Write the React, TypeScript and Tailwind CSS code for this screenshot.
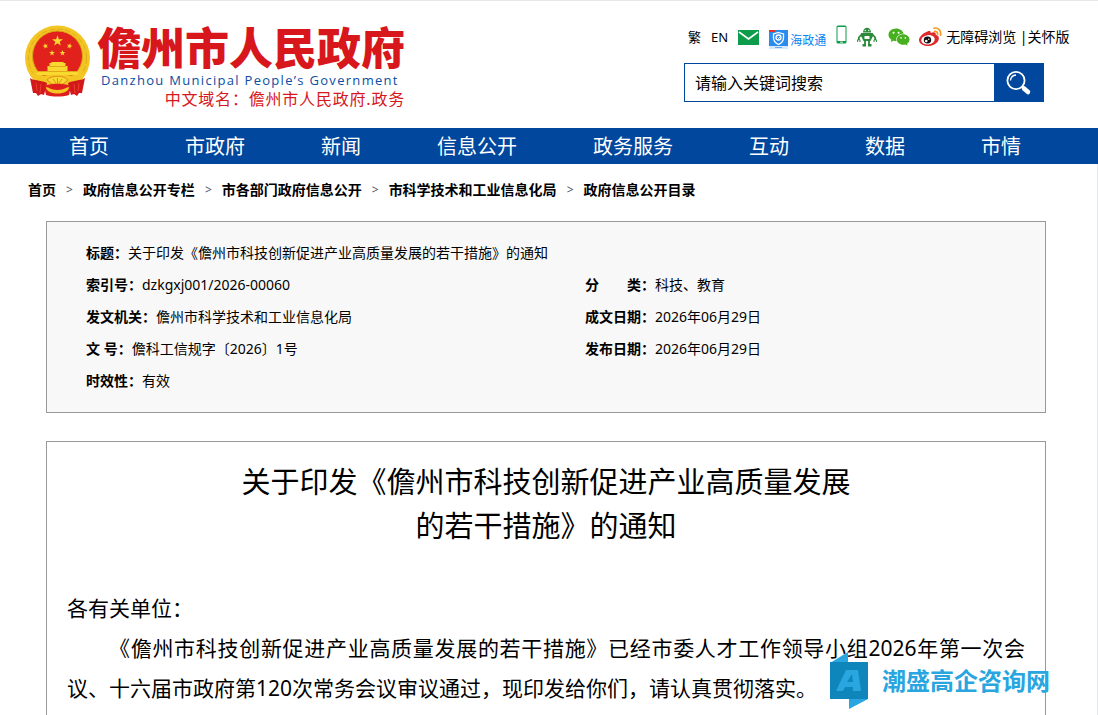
import React from 'react';
import { AiFillWechat } from 'react-icons/ai';

const navItems = ['首页', '市政府', '新闻', '信息公开', '政务服务', '互动', '数据', '市情'];

const crumbs = ['首页', '政府信息公开专栏', '市各部门政府信息公开', '市科学技术和工业信息化局', '政府信息公开目录'];

const metaRows = [
  [{ label: '索引号', value: 'dzkgxj001/2026-00060' }, { label: '分\u3000\u3000类', value: '科技、教育' }],
  [{ label: '发文机关', value: '儋州市科学技术和工业信息化局' }, { label: '成文日期', value: '2026年06月29日' }],
  [{ label: '文 号', value: '儋科工信规字〔2026〕1号' }, { label: '发布日期', value: '2026年06月29日' }],
];

const starPath = 'M0 -5 L1.2 -1.6 L4.8 -1.5 L1.9 0.6 L2.9 4 L0 2 L-2.9 4 L-1.9 0.6 L-4.8 -1.5 L-1.2 -1.6 Z';

const Emblem = () => (
  <svg viewBox="0 0 66 72" className="h-[72px] w-[66px] shrink-0" aria-hidden="true">
    <circle cx="32.500" cy="33" r="32.500" fill="#f3c623" />
    <circle cx="32.500" cy="33" r="29" fill="none" stroke="#dfae1c" strokeWidth="1" strokeDasharray="6 2" />
    <circle cx="32.500" cy="31" r="25" fill="#e1211c" stroke="#d9a514" strokeWidth="1" />
    <g fill="#f8d92f">
      <path d={starPath} transform="translate(32.500 16) scale(1.150)" />
      <path d={starPath} transform="translate(20.500 21) rotate(-15) scale(0.600)" />
      <path d={starPath} transform="translate(44.500 21) rotate(15) scale(0.600)" />
      <path d={starPath} transform="translate(27 28) scale(0.600)" />
      <path d={starPath} transform="translate(37.500 28) scale(0.600)" />
      <path d="M24.500 38h2v-1h12v1h2v3h-16zM22.500 41h20v5h-20z" />
      <path d="M14 46h37l4 4H10z" />
    </g>
    <path d="M24 41.500h17M14 46.500h37" stroke="#e09a1a" strokeWidth="0.800" />
    <path d="M5 47c6 3 12 4 18 3h19c6 1 12 0 18-3l-3 9c-14 5-34 5-48 0z" fill="#f3c623" />
    <path d="M5 53c4 3 12 2 17 5l-3 12-3-1-3 2-2-3-3 0z" fill="#d2181b" />
    <path d="M60 53c-4 3-12 2-17 5l3 12 3-1 3 2 2-3 3 0z" fill="#d2181b" />
    <path d="M11 58l1 8M16 59l-1 9M54 58l-1 8M49 59l1 9" stroke="#ef4a35" strokeWidth="0.800" />
    <path d="M22 55c4-5 17-5 21 0l-5 4H27z" fill="#f8d92f" stroke="#e0781a" strokeWidth="0.800" />
    <path d="M32.500 53v5M28 54l3 4M37 54l-3 4" stroke="#e0781a" strokeWidth="0.800" />
    <path d="M19 61c8-3 19-3 27 0l-2 9c-7 2-16 2-23 0z" fill="#de1f1d" />
    <path d="M21 62c3 0 4 3 11.500 3S41 62 44 62c0 4-5 6.500-11.500 6.500S21 66 21 62z" fill="#f3c623" />
  </svg>
);

const MailIcon = () => (
  <svg viewBox="0 0 21 15" className="h-[15px] w-[21px]" aria-hidden="true">
    <rect width="21" height="15" fill="#0d9c49" />
    <path d="M1 2l9.500 7L20 2" fill="none" stroke="#fff" strokeWidth="1.600" />
  </svg>
);

const ShieldAppIcon = () => (
  <svg viewBox="0 0 19 19" className="h-[19px] w-[19px]" aria-hidden="true">
    <rect width="19" height="16" fill="#2b8cf0" />
    <path d="M0 16h19v3H0z" fill="#d5e9fc" />
    <path d="M6 17.500h7" stroke="#69aaf0" />
    <rect width="6" height="2" fill="#e5322d" />
    <path d="M9.500 2.500l5 1.500v4c0 3-2 5-5 6.500-3-1.500-5-3.500-5-6.500V4z" fill="none" stroke="#fff" strokeWidth="1.300" />
    <circle cx="9.500" cy="7.500" r="2.500" fill="none" stroke="#fff" strokeWidth="1.300" />
    <path d="M8.500 7.500l1 1 2-2" fill="none" stroke="#fff" />
  </svg>
);

const PhoneIcon = () => (
  <svg viewBox="0 0 11 19" className="h-[19px] w-[11px]" aria-hidden="true">
    <rect x="0.500" y="0.500" width="10" height="18" rx="1.500" fill="#0d9c49" />
    <rect x="1.500" y="2" width="8" height="14" fill="#fff" />
    <path d="M4 17.200h3" stroke="#fff" strokeWidth="0.800" />
  </svg>
);

const RobotIcon = () => (
  <svg viewBox="0 0 20 20" className="h-5 w-5" aria-hidden="true">
    <path d="M6 5.500c0-6.500 8-6.500 8 0z" fill="#2c8a3b" />
    <path d="M4 6h12v3l-2.500 5h-7L4 9z" fill="#2c8a3b" />
    <g fill="none" stroke="#2c8a3b">
      <path d="M5 7L1.800 10.500V13M15 7l3.200 3.500V13" strokeWidth="1.800" />
      <path d="M0.600 15v-2.200h2.400V15M17 15v-2.200h2.400V15" />
      <path d="M8 13v4M12 13v4" strokeWidth="1.800" />
    </g>
    <path d="M5.500 17H9v2.500H5.500zM11 17h3.500v2.500H11z" fill="#2c8a3b" />
    <circle cx="8.300" cy="3.500" r="0.700" fill="#fff" />
    <circle cx="11.700" cy="3.500" r="0.700" fill="#fff" />
    <path d="M7.500 9h5v3h-5z" fill="#fff" />
  </svg>
);

const WeiboIcon = () => (
  <svg viewBox="0 0 23 20" className="h-5 w-[23px]" aria-hidden="true">
    <path d="M8.500 4.500c2-1 3.500-.5 3.200 1.500 3-1.200 5.500-1 5 1.800 2.500.8 3.800 2.300 3 4.700C18.500 16.500 14 19 9 19c-5 0-9-2.500-9-6 0-3 4-7 8.500-8.500z" fill="#dc2a2c" />
    <ellipse cx="9" cy="12.800" rx="6.800" ry="4.700" fill="#fff" transform="rotate(-8 9 12.800)" />
    <ellipse cx="8.500" cy="13" rx="3.700" ry="3.400" fill="#111" />
    <circle cx="7.300" cy="14" r="1.300" fill="#fff" />
    <circle cx="9.800" cy="12.200" r="0.700" fill="#fff" />
    <path d="M15 1.200c4-1 7.500 2.300 6.500 7M15.500 4.300c2-.3 3.500 1.200 3 3.200" fill="none" stroke="#f39a1e" strokeWidth="1.700" strokeLinecap="round" />
  </svg>
);

const SearchIcon = () => (
  <svg viewBox="0 0 26 26" className="h-[26px] w-[26px]" aria-hidden="true">
    <circle cx="10" cy="10.500" r="8.600" fill="none" stroke="#fff" strokeWidth="1.800" />
    <path d="M4.500 10.500c.2-3 2.300-5.200 5.500-5.500" fill="none" stroke="#fff" strokeWidth="1.300" />
    <path d="M16.500 16.500l2 1.500" stroke="#fff" strokeWidth="2" />
    <path d="M18 18.500l4 3.500" stroke="#fff" strokeWidth="4.500" strokeLinecap="round" />
  </svg>
);

const Header = () => (
  <header className="flex h-32 items-start justify-between border-t border-gray-200 pl-[25px] pr-[30px]">
    <a href="#" className="mt-6 flex gap-1.5">
      <Emblem />
      <div className="flex flex-col">
        <span className="text-[44px] leading-[46px] font-black whitespace-nowrap text-[#d7171c]">儋州市人民政府</span>
        <span className="pl-1 font-['Open_Sans',sans-serif] text-[13px] leading-[18px] font-medium tracking-widest whitespace-nowrap text-[#0b4ea2]">
          Danzhou Municipal People’s Government
        </span>
        <span className="text-right text-base leading-5 tracking-wider text-[#d7171c]">中文域名：儋州市人民政府.政务</span>
      </div>
    </a>
    <div className="mt-6 w-[384px]">
      <div className="flex h-6 items-center gap-2.5 pl-1 text-sm whitespace-nowrap">
        <a href="#" className="text-[13px]">繁</a>
        <a href="#" className="text-[13px]">EN</a>
        <a href="#" aria-label="邮箱"><MailIcon /></a>
        <a href="#" className="flex items-end gap-0.5 self-end text-xs leading-4 text-[#0a84f0]">
          <ShieldAppIcon />
          海政通
        </a>
        <a href="#" aria-label="手机版" className="self-start"><PhoneIcon /></a>
        <a href="#" aria-label="智能问答"><RobotIcon /></a>
        <a href="#" aria-label="微信"><AiFillWechat size={24} color="#46b01e" /></a>
        <a href="#" aria-label="微博" className="-ml-0.5"><WeiboIcon /></a>
        <span className="-ml-1.5">
          <a href="#">无障碍浏览</a> |<a href="#">关怀版</a>
        </span>
      </div>
      <form className="mt-3.5 flex h-[39px] w-[360px]" onSubmit={(e) => e.preventDefault()}>
        <input
          type="text"
          aria-label="搜索"
          placeholder="请输入关键词搜索"
          className="min-w-0 flex-1 border border-r-0 border-[#00479d] px-2.5 text-base outline-none placeholder:text-black"
        />
        <button type="submit" aria-label="搜索" className="flex w-[50px] items-center justify-center bg-[#00479d]">
          <SearchIcon />
        </button>
      </form>
    </div>
  </header>
);

const Field = ({ label, value }: { label: string; value: string }) => (
  <>
    <b>{label}：</b>
    {value}
  </>
);

const MetaTable = () => (
  <div className="border border-[#999] bg-[#f8f8f8] py-[15px]">
    <table className="w-full table-fixed text-sm leading-8">
      <tbody>
        <tr>
          <td colSpan={2} className="pl-[39px]">
            <Field label="标题" value="关于印发《儋州市科技创新促进产业高质量发展的若干措施》的通知" />
          </td>
        </tr>
        {metaRows.map((row) => (
          <tr key={row[0].label}>
            {row.map((field) => (
              <td key={field.label} className="h-8 pl-[39px]">
                <Field {...field} />
              </td>
            ))}
          </tr>
        ))}
        <tr>
          <td colSpan={2} className="pl-[39px]">
            <Field label="时效性" value="有效" />
          </td>
        </tr>
      </tbody>
    </table>
  </div>
);

const Watermark = () => (
  <div className="absolute right-12 bottom-1.5 flex items-center gap-3.5 text-2xl leading-6 font-bold text-[#29a6e0]">
    <svg viewBox="0 0 38 57" className="h-[57px] w-[38px]" aria-hidden="true">
      <path d="M0 11L18 0v11z" fill="#29a6e0" />
      <path d="M19 47h19L19 57z" fill="#29a6e0" />
      <rect y="10" width="38" height="37" fill="#0e86bb" />
      <path d="M16 18h12l3 21h-8v-4h-8l-2 4H6zM22 22l-5 8h6z" fill="#29a6e0" fillRule="evenodd" />
    </svg>
    <span>潮盛高企咨询网</span>
  </div>
);

export default function App() {
  return (
    <div className="relative flex min-h-screen flex-col bg-white font-['Noto_Sans','Noto_Sans_CJK_SC',sans-serif] text-black">
      <Header />
      <nav className="flex h-9 bg-[#00479d] pl-[31px] text-xl leading-[38px] text-white">
        {navItems.map((item) => (
          <a key={item} href="#" className="px-[38px] whitespace-nowrap">{item}</a>
        ))}
      </nav>

      <div className="flex flex-1 flex-col border-r border-gray-200">
        <div className="flex h-[57px] items-start gap-2.5 pt-4 pl-7 text-sm leading-5 font-bold">
          {crumbs.map((crumb, i) => (
            <React.Fragment key={crumb}>
              {i > 0 && <span className="text-xs leading-5 font-normal text-gray-600">&gt;</span>}
              <a href="#">{crumb}</a>
            </React.Fragment>
          ))}
        </div>

        <main className="flex flex-1 flex-col gap-7 pr-[51px] pl-[46px]">
          <MetaTable />
          <article className="flex-1 border border-b-0 border-[#999] px-5 pt-[18px]">
            <h1 className="text-center text-[29px] leading-[44px]">
              关于印发《儋州市科技创新促进产业高质量发展
              <br />
              的若干措施》的通知
            </h1>
            <div className="mt-10 text-justify text-[21px] leading-10">
              <p>各有关单位：</p>
              <p className="indent-[2em]">
                《儋州市科技创新促进产业高质量发展的若干措施》已经市委人才工作领导小组2026年第一次会议、十六届市政府第120次常务会议审议通过，现印发给你们，请认真贯彻落实。
              </p>
            </div>
          </article>
        </main>
      </div>
      <Watermark />
    </div>
  );
}
